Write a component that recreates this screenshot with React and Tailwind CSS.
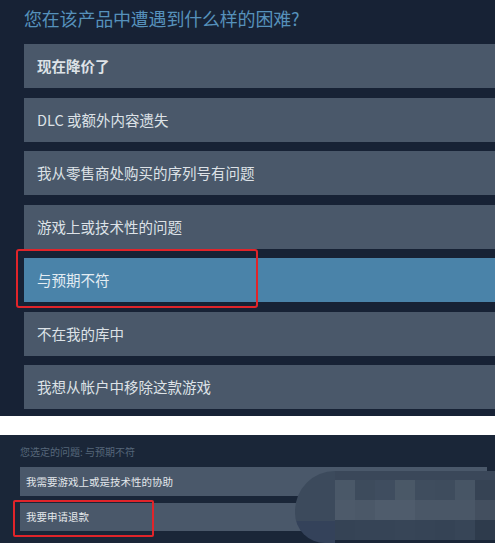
const font = { fontFamily: '"Noto Sans CJK SC", "Noto Sans", sans-serif' };

const issues = [
  '现在降价了',
  'DLC 或额外内容遗失',
  '我从零售商处购买的序列号有问题',
  '游戏上或技术性的问题',
  '与预期不符',
  '不在我的库中',
  '我想从帐户中移除这款游戏',
];

const mosaic = [
  ['#4a5868', '#3d4b5c', '#3f4d5f', '#4a5867', '#3f4d5e', '#3e4c5d', '#475565', '#364354'],
  ['#4d5a6a', '#4b5868', '#4f5c6c', '#4f5c6c', '#4a5767', '#4a5767', '#4a5767', '#434f5f'],
  ['#354355', '#364456', '#364456', '#374557', '#364456', '#354355', '#374557', '#2e3b4c'],
];

export default function App() {
  return (
    <div className="w-[495px] h-[543px] bg-white overflow-hidden" style={font}>
      {/* first screen: pick the problem */}
      <div className="relative h-[416px] bg-[#172235] pl-6 pt-[5px]">
        <h1 className="text-[18px] leading-[26px] text-[#5691bb] tracking-[-0.2px]">
          您在该产品中遭遇到什么样的困难?
        </h1>
        <div className="mt-[13px] flex flex-col gap-[9.5px]">
          {issues.map((label, i) => (
            <div
              key={label}
              className={`h-[44px] flex items-center pl-[13px] text-[14.5px] ${
                i === 4
                  ? 'bg-[#4a83a9] text-[#e4edf3]'
                  : 'bg-[#4a586a] text-[#dde2e7]'
              } ${i === 0 ? 'font-bold' : ''}`}
            >
              {label}
            </div>
          ))}
        </div>
        <div className="absolute left-[16px] top-[249px] w-[242px] h-[59px] border-[2.5px] border-[#e0242a] rounded-[3px]" />
      </div>

      {/* second screen: selected problem */}
      <div className="relative mt-[19px] h-[108px] bg-[#1a2638] pl-5 pr-2 pt-[10px]">
        <p className="text-[10px] leading-[14px] text-[#56667a]">您选定的问题: 与预期不符</p>
        <div className="mt-[8px] flex flex-col gap-[7px]">
          <div className="h-[29px] flex items-center pl-[6px] bg-[#4a586a] text-[10.5px] text-[#e3e7eb]">
            我需要游戏上或是技术性的协助
          </div>
          <div className="h-[28px] flex items-center pl-[6px] bg-[#4a586a] text-[10.5px] text-[#e3e7eb]">
            我要申请退款
          </div>
        </div>
        <div className="absolute left-[13px] top-[65px] w-[141px] h-[37px] border-2 border-[#e0242a] rounded-[2px]" />

        {/* pixelated blur over the right side */}
        <div className="absolute left-[295px] top-[36px] w-[200px] h-[72px] flex overflow-hidden rounded-tl-[40px] rounded-bl-[30px]">
          <div className="w-[45px] flex flex-col">
            <div className="flex-1 bg-[#3c4a5c]" />
            <div className="h-[22px] bg-[#34425a]" />
          </div>
          <div className="flex-1 flex flex-col">
            <div className="h-[9px] bg-[#3a4759]" />
            {mosaic.map((row, r) => (
              <div key={r} className="h-[20px] flex">
                {row.map((c, j) => (
                  <div key={j} className="w-[20px] shrink-0" style={{ backgroundColor: c }} />
                ))}
              </div>
            ))}
          </div>
        </div>
      </div>
    </div>
  );
}
